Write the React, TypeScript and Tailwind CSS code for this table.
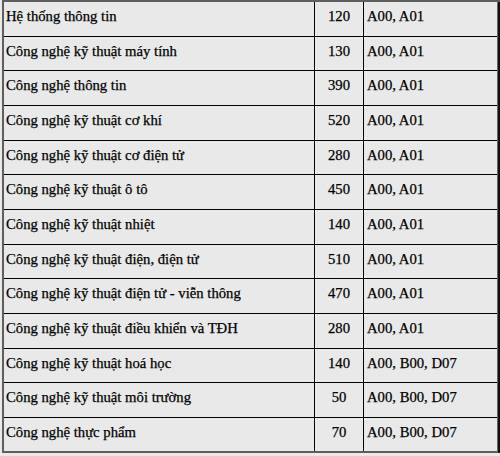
import React from 'react';

// Admission quota table (cropped view)
const ROWS: [string, string, string][] = [
  ['Hệ thống thông tin', '120', 'A00, A01'],
  ['Công nghệ kỹ thuật máy tính', '130', 'A00, A01'],
  ['Công nghệ thông tin', '390', 'A00, A01'],
  ['Công nghệ kỹ thuật cơ khí', '520', 'A00, A01'],
  ['Công nghệ kỹ thuật cơ điện tử', '280', 'A00, A01'],
  ['Công nghệ kỹ thuật ô tô', '450', 'A00, A01'],
  ['Công nghệ kỹ thuật nhiệt', '140', 'A00, A01'],
  ['Công nghệ kỹ thuật điện, điện tử', '510', 'A00, A01'],
  ['Công nghệ kỹ thuật điện tử - viễn thông', '470', 'A00, A01'],
  ['Công nghệ kỹ thuật điều khiển và TĐH', '280', 'A00, A01'],
  ['Công nghệ kỹ thuật hoá học', '140', 'A00, B00, D07'],
  ['Công nghệ kỹ thuật môi trường', '50', 'A00, B00, D07'],
  ['Công nghệ thực phẩm', '70', 'A00, B00, D07'],
];

export default function App() {
  return (
    <div
      className="w-[500px] h-[456px] bg-[#e9e9e9] overflow-hidden pl-[2px] text-[14.7px] text-black [-webkit-text-stroke:0.25px_black]"
      style={{ fontFamily: '"Liberation Serif", "Times New Roman", serif' }}
    >
      <div className="border-t-2 border-l-2 border-[#5e5e5e] w-[498px]">
        <div className="border-r-2 border-[#111]">
          <div className="border-r border-[#666]">
            {ROWS.map(([name, quota, groups], i) => (
              <div
                key={i}
                className={`flex h-[34.67px] ${
                  i === ROWS.length - 1 ? 'border-b-2 border-[#5e5e5e]' : 'border-b border-black'
                }`}
              >
                <div className="w-[311px] pl-[2px] pt-[6px] leading-[17px] border-r border-black">{name}</div>
                <div className="w-[49px] pt-[6px] leading-[17px] text-center border-r border-black">{quota}</div>
                <div className="flex-1 pl-[3px] pt-[6px] leading-[17px]">{groups}</div>
              </div>
            ))}
          </div>
        </div>
      </div>
    </div>
  );
}
